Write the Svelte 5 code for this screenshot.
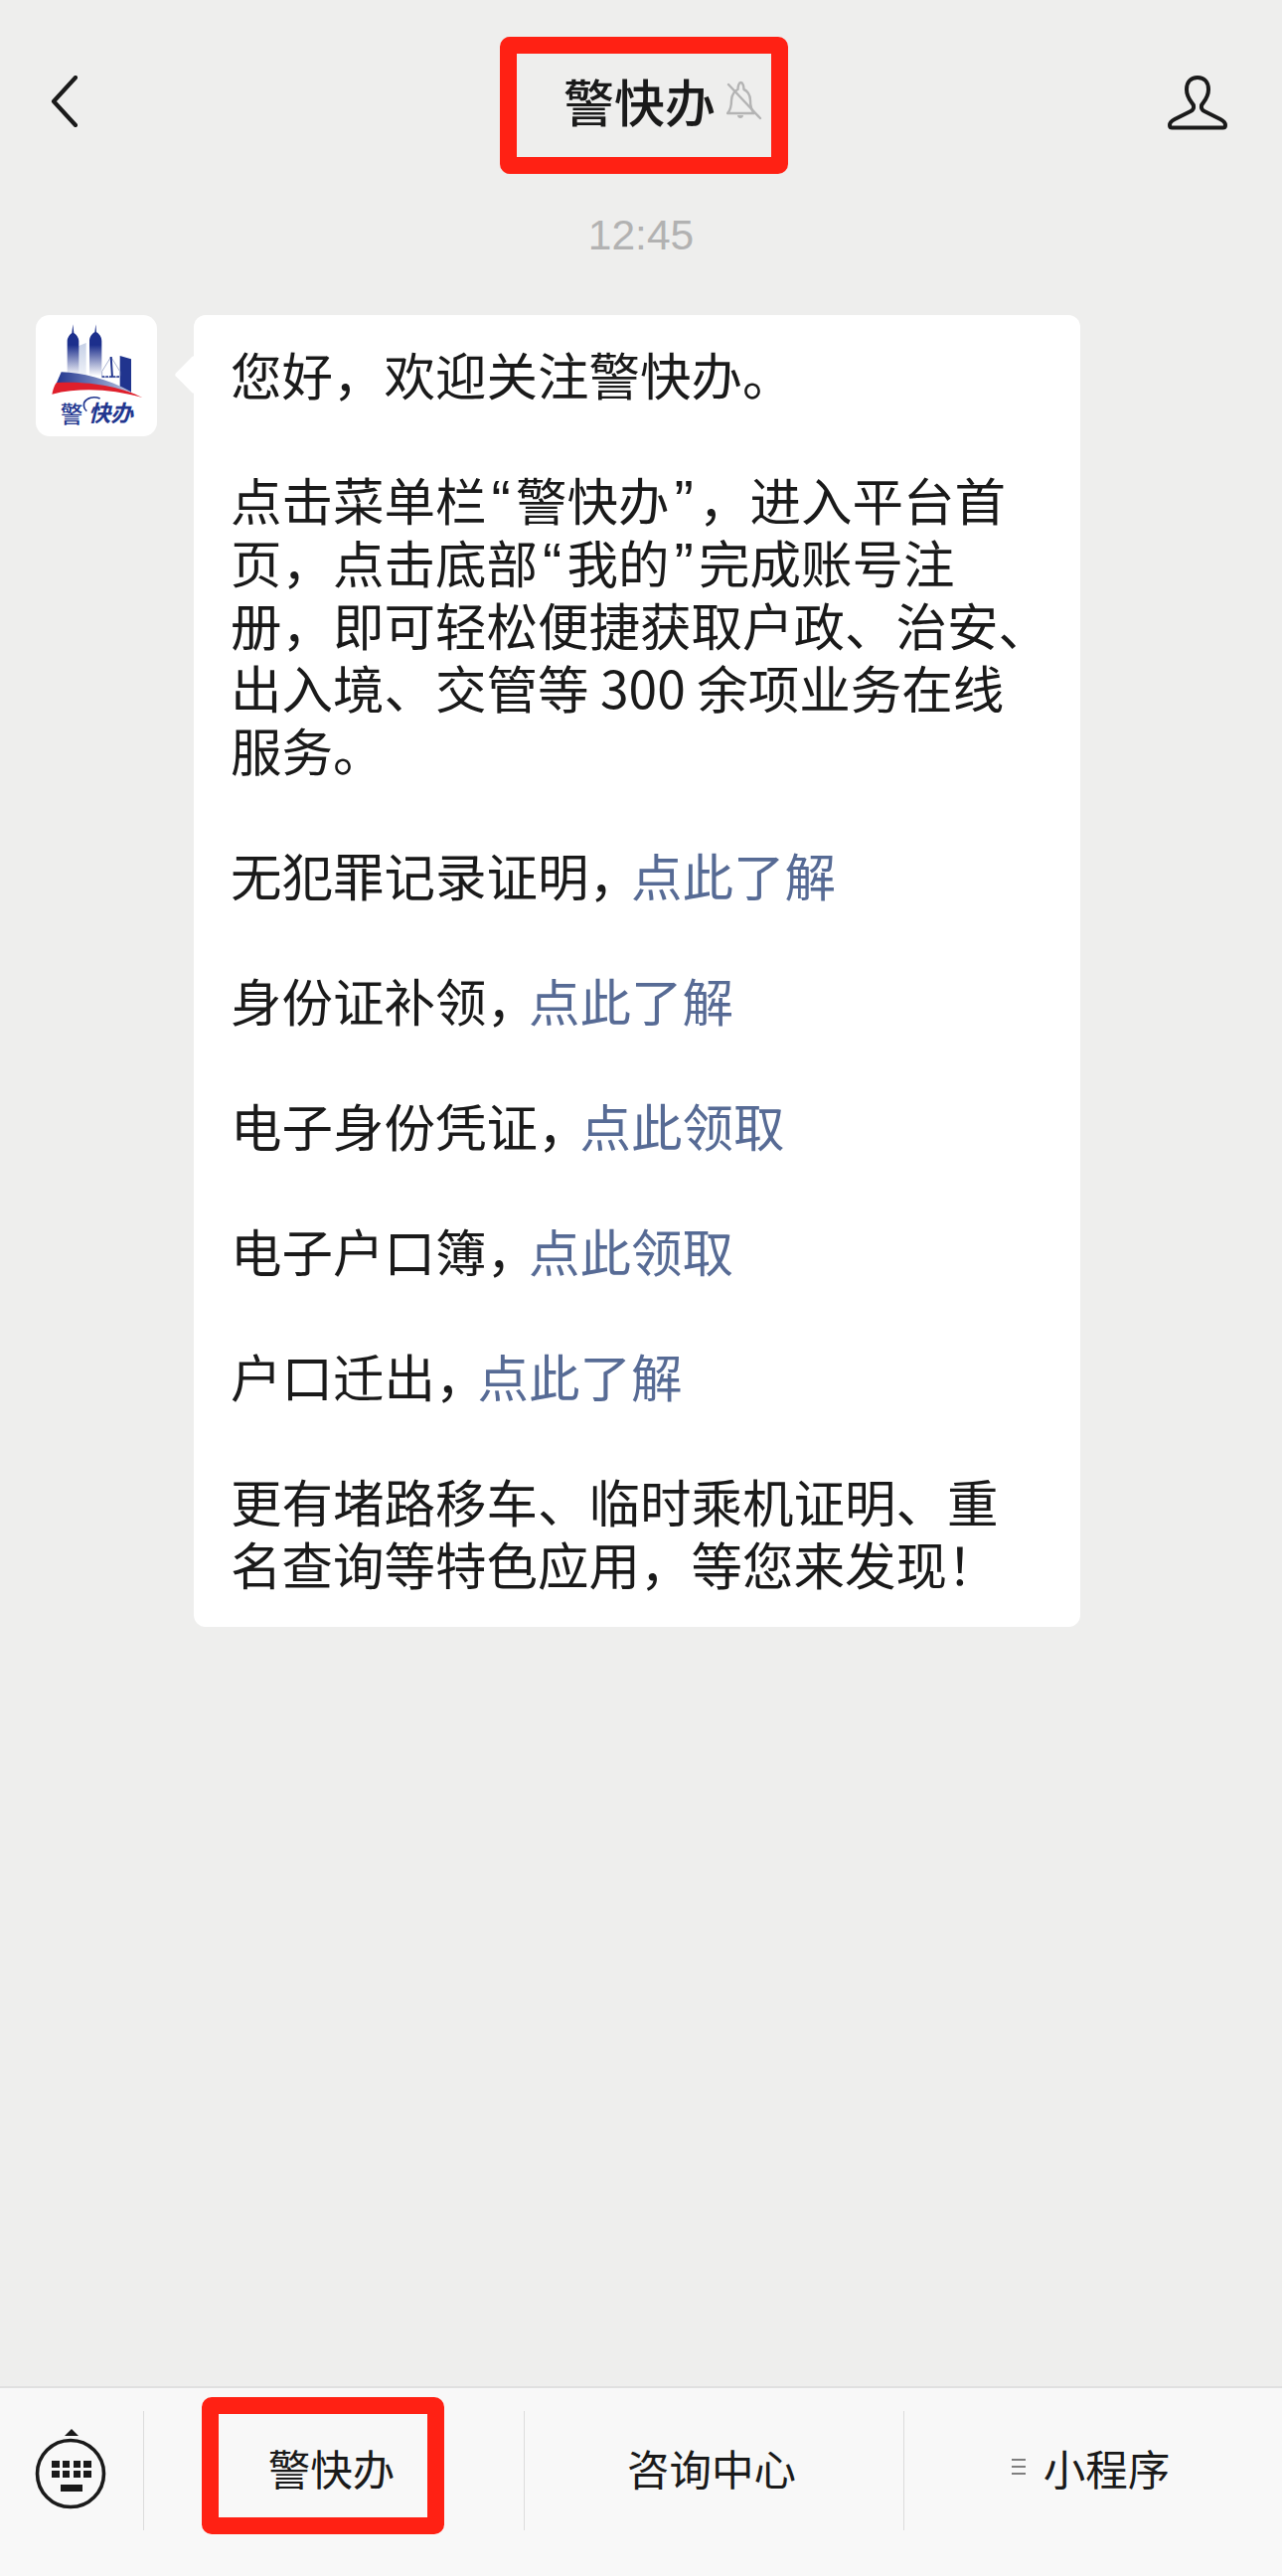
<script>
  const paragraphs = [
    { lines: ['您好，欢迎关注警快办。'] },
    {
      lines: [
        '点击菜单栏“警快办”，进入平台首',
        '页，点击底部“我的”完成账号注',
        '册，即可轻松便捷获取户政、治安、',
        '出入境、交管等 300 余项业务在线',
        '服务。'
      ]
    },
    { lines: ['无犯罪记录证明，'], link: '点此了解' },
    { lines: ['身份证补领，'], link: '点此了解' },
    { lines: ['电子身份凭证，'], link: '点此领取' },
    { lines: ['电子户口簿，'], link: '点此领取' },
    { lines: ['户口迁出，'], link: '点此了解' },
    { lines: ['更有堵路移车、临时乘机证明、重', '名查询等特色应用，等您来发现！'] }
  ];

  // curly quotes are narrow in the original, the CJK font makes them full width
  const segments = (line) => line.split(/([“”])/).filter(Boolean);
</script>

<div class="page">
  <header class="nav">
    <button class="icon-btn back" aria-label="返回">
      <svg width="27" height="52" viewBox="0 0 27 52">
        <path d="M25 2 3 26l22 24" fill="none" stroke="#1a1a1a" stroke-width="4.200" stroke-linecap="round" stroke-linejoin="round" />
      </svg>
    </button>
    <div class="title">
      <span class="title-text">警快办</span>
      <svg class="bell" width="36" height="40" viewBox="0 0 36 40">
        <path d="M1 33c3-3 4-6 4-13 0-6 4-10 6.500-11 0-3 1-7 3-7s3 4 3 7c3 1 6.500 5 6.500 11 0 7 1 10 4 13z" fill="none" stroke="#b4b4b4" stroke-width="2.400" stroke-linejoin="round" />
        <path d="M11 35c0 4 6 4 6 0z" fill="#b4b4b4" />
        <path d="M2 4l32 34" stroke="#b4b4b4" stroke-width="2.400" stroke-linecap="round" />
      </svg>
      <span class="mark title-mark"></span>
    </div>
    <button class="icon-btn user" aria-label="聊天信息">
      <svg width="60" height="56" viewBox="0 0 60 56">
        <path d="M30 2c-7 0-11 5-11 12 0 6 2 9 5 13 3 3 3 7-1 9L7 44c-3 1.500-5 3-5 6 0 1.500 1 2.500 2.500 2.500h51c1.500 0 2.500-1 2.500-2.500 0-3-2-4.500-5-6l-16-8c-4-2-4-6-1-9 3-4 5-7 5-13 0-7-4-12-11-12z" fill="none" stroke="#1a1a1a" stroke-width="4" stroke-linejoin="round" />
      </svg>
    </button>
  </header>

  <main class="chat">
    <div class="time">12:45</div>
    <div class="message">
      <div class="avatar">
        <svg width="122" height="122" viewBox="0 0 366 366">
          <defs>
            <linearGradient id="tower" x1="0" y1="0" x2="0" y2="1">
              <stop offset="0.400" stop-color="#1c2f8c" />
              <stop offset="1" stop-color="#ffffff" />
            </linearGradient>
            <linearGradient id="pale" x1="0" y1="0" x2="0" y2="1">
              <stop offset="0" stop-color="#c6d0e6" />
              <stop offset="1" stop-color="#eef1f8" />
            </linearGradient>
            <linearGradient id="deck" x1="0" y1="0" x2="1" y2="0">
              <stop offset="0" stop-color="#22368f" />
              <stop offset="1" stop-color="#b7c2e0" />
            </linearGradient>
          </defs>
          <path d="M117 98l35-14v96h-35z" fill="url(#pale)" />
          <path d="M112 28l3 26c8 5 15 15 15 25v105H95V79c0-10 7-20 14-25z" fill="url(#tower)" />
          <path d="M181 28l2 24c9 4 16 15 16 27v105h-37V79c0-12 7-23 16-27z" fill="url(#tower)" />
          <path d="M254 123l34 10v100l-34-14z" fill="#20348e" />
          <path d="M227 126l-27 44v18h54v-18z" fill="none" stroke="#aab4d2" stroke-width="3" />
          <path d="M227 126l4 62" stroke="#20348e" stroke-width="6" />
          <path d="M200 186h88" stroke="#20348e" stroke-width="5" stroke-dasharray="8 3" />
          <path d="M77 172c60 2 140 20 211 60l-40-6c-60-16-120-24-186-20z" fill="url(#deck)" />
          <path d="M49 239c4-16 8-30 14-35 100-6 200 14 259 45-90-24-180-32-273-10z" fill="#df1f2b" />
          <path d="M146 264c8-14 28-20 48-12M146 264c-2 10 0 20 8 26" fill="none" stroke="#22368f" stroke-width="5" />
          <text class="logo-text" x="74" y="324">警</text>
          <text class="logo-text fast" x="158" y="322">快办</text>
        </svg>
      </div>
      <div class="bubble">
        {#each paragraphs as para}
          <p>
            {#each para.lines as line}
              <span class="line">{#each segments(line) as seg}{#if seg === '“' || seg === '”'}<span class="quote">{seg}</span>{:else}{seg}{/if}{/each}{#if para.link}<span class="link">{para.link}</span>{/if}</span>
            {/each}
          </p>
        {/each}
      </div>
    </div>
  </main>

  <footer class="bar">
    <button class="keyboard" aria-label="切换键盘">
      <svg width="72" height="82" viewBox="0 0 72 82">
        <path d="M30 7l7-7 7 7z" fill="#1a1a1a" />
        <circle cx="36" cy="45" r="33.500" fill="none" stroke="#1a1a1a" stroke-width="3.600" />
        <g fill="#1a1a1a">
          <rect x="17" y="32" width="8" height="7" />
          <rect x="28" y="32" width="7" height="7" />
          <rect x="39" y="32" width="7" height="7" />
          <rect x="49" y="32" width="8" height="7" />
          <rect x="17" y="42" width="8" height="7" />
          <rect x="28" y="42" width="7" height="7" />
          <rect x="39" y="42" width="7" height="7" />
          <rect x="49" y="42" width="8" height="7" />
          <rect x="26" y="56" width="22" height="7" />
        </g>
      </svg>
    </button>
    <div class="tab">
      警快办
      <span class="mark tab-mark"></span>
    </div>
    <div class="tab">咨询中心</div>
    <div class="tab">
      <span class="menu-lines"><i></i><i></i><i></i></span>
      小程序
    </div>
  </footer>
</div>

<style>
  :global(body) {
    margin: 0;
    background: #eeeeed;
  }

  .page {
    width: 1290px;
    height: 2592px;
    display: flex;
    flex-direction: column;
    background: #eeeeed;
    color: #1a1a1a;
    font-family: "Noto Sans CJK SC", "Liberation Sans", sans-serif;
  }

  .nav {
    height: 205px;
    flex: none;
    display: flex;
    align-items: flex-start;
    justify-content: space-between;
    padding: 76px 55px 0 51px;
    box-sizing: border-box;
    position: relative;
  }

  .icon-btn, .keyboard {
    background: none;
    border: none;
    padding: 0;
    display: block;
  }

  .icon-btn svg, .keyboard svg {
    display: block;
  }

  .title {
    position: absolute;
    left: 567px;
    top: 69px;
    display: flex;
    align-items: center;
    gap: 11px;
  }

  .title-text {
    font-size: 51px;
    line-height: 64px;
    font-weight: 500;
  }

  .mark {
    position: absolute;
    border: 17px solid #ff2114;
    border-radius: 10px;
    box-sizing: border-box;
  }

  .title-mark {
    left: -64px;
    top: -32px;
    width: 290px;
    height: 138px;
  }

  .chat {
    flex: 1;
    padding: 0 36px;
  }

  .time {
    font-family: "Liberation Sans", sans-serif;
    font-size: 42.500px;
    line-height: 64px;
    text-align: center;
    color: #b2b2b2;
  }

  .message {
    display: flex;
    align-items: flex-start;
    gap: 37px;
    margin-top: 48px;
  }

  .avatar {
    width: 122px;
    height: 122px;
    flex: none;
    background: #fff;
    border-radius: 14px;
    overflow: hidden;
  }

  .avatar svg {
    display: block;
  }

  .logo-text {
    font-family: "Noto Sans CJK SC", sans-serif;
    font-size: 68px;
    font-weight: 500;
    fill: #22368f;
  }

  .logo-text.fast {
    font-size: 68px;
    font-weight: 700;
    font-style: italic;
  }

  .bubble {
    position: relative;
    width: 892px;
    box-sizing: border-box;
    padding: 27px 20px 33px 37px;
    background: #fff;
    border-radius: 12px;
    font-size: 51.500px;
    line-height: 63px;
  }

  .bubble::before {
    content: "";
    position: absolute;
    left: -14px;
    top: 46px;
    width: 28px;
    height: 28px;
    background: #fff;
    border-radius: 3px;
    transform: rotate(45deg);
  }

  .bubble p {
    position: relative;
    margin: 0 0 63px;
  }

  .bubble p:last-child {
    margin-bottom: 0;
  }

  .line {
    display: block;
    white-space: nowrap;
  }

  .quote {
    display: inline-block;
    width: 29.500px;
    text-align: center;
    font-family: "Liberation Sans", sans-serif;
    font-size: 58px;
    line-height: 1;
  }

  .link {
    color: #576b95;
    margin-left: -9px;
  }

  .bar {
    height: 191px;
    flex: none;
    box-sizing: border-box;
    display: grid;
    grid-template-columns: 144px 383px 382px 381px;
    align-items: start;
    padding-top: 23px;
    background: #f8f8f8;
    border-top: 2px solid #e0e0e0;
  }

  .keyboard {
    justify-self: start;
    margin: 18px 0 0 35px;
  }

  .tab {
    position: relative;
    height: 120px;
    display: flex;
    align-items: center;
    justify-content: center;
    gap: 18px;
    padding: 0 5px 8px 0;
    font-size: 42.500px;
    border-left: 1px solid #dcdcdc;
    box-sizing: border-box;
  }

  .tab-mark {
    left: 58px;
    top: -14px;
    width: 244px;
    height: 138px;
  }

  .menu-lines {
    display: flex;
    flex-direction: column;
    gap: 5px;
  }

  .menu-lines i {
    display: block;
    width: 14px;
    height: 2px;
    background: #7f7f7f;
  }
</style>
